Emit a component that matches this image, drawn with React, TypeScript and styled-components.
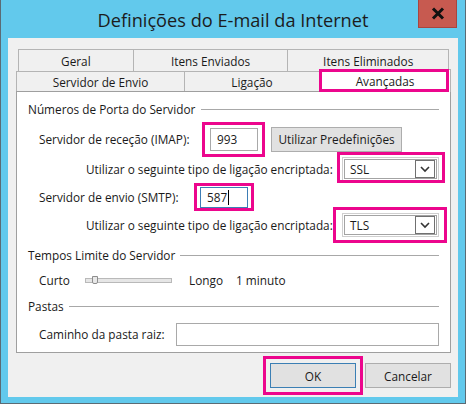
import React from "react";
import styled, { createGlobalStyle } from "styled-components";

const GlobalStyle = createGlobalStyle`
  html, body {
    margin: 0;
    padding: 0;
    background: #ffffff;
  }
  body {
    font-family: "Open Sans", "Noto Sans", sans-serif;
    font-size: 11.8px;
    color: #1a1a1a;
  }
`;

const Window = styled.div`
  width: 466px;
  height: 404px;
  box-sizing: border-box;
  border: 1px solid #5b6b74;
  border-top: none;
  background: #62c9ec;
  display: flex;
  flex-direction: column;
  overflow: hidden;
`;

const TitleBar = styled.div`
  height: 38px;
  flex: none;
  display: grid;
  grid-template-columns: 1fr auto 1fr;
  align-items: start;
`;

const Title = styled.div`
  grid-column: 2;
  padding-top: 7px;
  font-size: 18.2px;
  line-height: 26px;
  color: #1c1c1c;
  white-space: nowrap;
`;

const CloseButton = styled.button`
  grid-column: 3;
  justify-self: end;
  margin-right: 8px;
  width: 39px;
  height: 28px;
  padding: 0;
  border: 1px solid #a8453f;
  border-top: none;
  background: #c75a50;
  display: flex;
  align-items: center;
  justify-content: center;
`;

const Client = styled.div`
  flex: 1;
  margin: 0 7px 6px 7px;
  background: #f0f0f0;
  display: flex;
  flex-direction: column;
  padding: 11px 7px 0 8px;
`;

const TabRow = styled.div<{ $inset: number }>`
  display: flex;
  height: ${(p) => (p.$inset ? 22 : 20)}px;
  margin: 0 ${(p) => p.$inset}px;
`;

const Tab = styled.div<{ $w: number; $active?: boolean }>`
  position: relative;
  width: ${(p) => p.$w}px;
  box-sizing: border-box;
  border: 1px solid #b4b4b4;
  border-bottom: none;
  margin-left: -1px;
  &:first-child {
    margin-left: 0;
  }
  background: ${(p) => (p.$active ? "#ffffff" : "#f0f0f0")};
  display: flex;
  align-items: center;
  justify-content: center;
  white-space: nowrap;
  ${(p) =>
    p.$active &&
    `
    margin-top: -2px;
    height: calc(100% + 3px);
    z-index: 2;
  `}
`;

const Mark = styled.span<{ $t: number; $r: number; $b: number; $l: number }>`
  position: absolute;
  top: ${(p) => -p.$t}px;
  right: ${(p) => -p.$r}px;
  bottom: ${(p) => -p.$b}px;
  left: ${(p) => -p.$l}px;
  border: 3px solid #ec068d;
  pointer-events: none;
  z-index: 3;
`;

const Panel = styled.div`
  width: 435px;
  height: 262px;
  box-sizing: border-box;
  border: 1px solid #9f9f9f;
  background: #ffffff;
  padding: 2px 11px 0 11px;
  display: flex;
  flex-direction: column;
`;

const Row = styled.div<{ $h: number; $indent?: number }>`
  height: ${(p) => p.$h}px;
  flex: none;
  display: flex;
  align-items: center;
  padding-left: ${(p) => p.$indent ?? 0}px;
  white-space: nowrap;
`;

const GroupLine = styled.div<{ $gap: number }>`
  flex: 1;
  height: 1px;
  margin-left: ${(p) => p.$gap}px;
  background: #a8a8a8;
`;

const Label = styled.span<{ $w?: number }>`
  display: inline-block;
  width: ${(p) => (p.$w ? `${p.$w}px` : "auto")};
  flex: none;
`;

const Anchor = styled.div`
  position: relative;
  display: flex;
  flex: none;
`;

const TextBox = styled.div<{ $w: number; $h: number; $focus?: boolean }>`
  width: ${(p) => p.$w}px;
  height: ${(p) => p.$h}px;
  box-sizing: border-box;
  border: 1px solid ${(p) => (p.$focus ? "#3d7db5" : "#a9a9a9")};
  background: #ffffff;
  display: flex;
  align-items: center;
  padding-left: 6px;
`;

const Caret = styled.span`
  display: inline-block;
  width: 1px;
  height: 15px;
  margin-left: 1px;
  background: #000000;
`;

const PushButton = styled.button<{ $w: number; $default?: boolean }>`
  width: ${(p) => p.$w}px;
  height: 25px;
  box-sizing: border-box;
  border: 1px solid ${(p) => (p.$default ? "#3b7fb4" : "#adadad")};
  background: #e1e1e1;
  font-family: inherit;
  font-size: 11.8px;
  color: #1a1a1a;
  padding: 0;
`;

const Select = styled.div`
  width: 97px;
  height: 24px;
  box-sizing: border-box;
  border: 1px solid #cfcfcf;
  padding: 1px;
  display: flex;
  flex: none;
`;

const SelectInner = styled.div`
  flex: 1;
  border: 1px solid #a3a3a3;
  display: flex;
  align-items: center;
  justify-content: space-between;
  padding: 0 1px 0 5px;
`;

const DropButton = styled.div`
  width: 20px;
  height: 18px;
  box-sizing: border-box;
  border: 1px solid #707070;
  display: flex;
  align-items: center;
  justify-content: center;
`;

const Track = styled.div`
  position: relative;
  width: 87px;
  height: 5px;
  box-sizing: border-box;
  border: 1px solid #b9b9b9;
  background: #e6e6e6;
  margin: 0 17px 0 0;
  flex: none;
`;

const Thumb = styled.div`
  position: absolute;
  left: 6px;
  top: -3px;
  width: 6px;
  height: 8px;
  box-sizing: border-box;
  border: 1px solid #8e8e8e;
  border-radius: 0 0 2px 2px;
  background: #e8e8e8;
`;

const Footer = styled.div`
  flex: 1;
  display: flex;
  justify-content: flex-end;
  align-items: flex-start;
  gap: 9px;
  padding-top: 10px;
`;

const PushRight = styled(Anchor)`
  margin-left: auto;
`;

const Chevron = () => (
  <svg width="12" height="8" viewBox="0 0 12 8">
    <path d="M2 2 L6 6 L10 2" fill="none" stroke="#333" strokeWidth="1.6" />
  </svg>
);

const CloseGlyph = () => (
  <svg width="14" height="13" viewBox="0 0 14 13">
    <path d="M2 1.5 L12 11.5 M12 1.5 L2 11.5" stroke="#111" strokeWidth="3" />
  </svg>
);

const Group = ({ title, gap }: { title: string; gap: number }) => (
  <>
    {title}
    <GroupLine $gap={gap} />
  </>
);

const Dropdown = ({ value }: { value: string }) => (
  <Select>
    <SelectInner>
      {value}
      <DropButton>
        <Chevron />
      </DropButton>
    </SelectInner>
  </Select>
);

export default function App() {
  return (
    <>
      <GlobalStyle />
      <Window>
        <TitleBar>
          <Title>Definições do E-mail da Internet</Title>
          <CloseButton aria-label="Fechar">
            <CloseGlyph />
          </CloseButton>
        </TitleBar>
        <Client>
          <TabRow $inset={2}>
            <Tab $w={116}>Geral</Tab>
            <Tab $w={156}>Itens Enviados</Tab>
            <Tab $w={162}>Itens Eliminados</Tab>
          </TabRow>
          <TabRow $inset={0}>
            <Tab $w={169}>Servidor de Envio</Tab>
            <Tab $w={136}>Ligação</Tab>
            <Tab $w={132} $active>
              Avançadas
              <Mark $t={1} $r={-1} $b={0} $l={1} />
            </Tab>
          </TabRow>
          <Panel>
            <Row $h={30}>
              <Group title="Números de Porta do Servidor" gap={6} />
            </Row>
            <Row $h={30} $indent={11}>
              <Label $w={171}>Servidor de receção (IMAP):</Label>
              <Anchor>
                <TextBox $w={48} $h={23}>993</TextBox>
                <Mark $t={6} $r={7} $b={6} $l={8} />
              </Anchor>
              <PushButton $w={131} style={{ marginLeft: 13 }}>
                Utilizar Predefinições
              </PushButton>
            </Row>
            <Row $h={30} $indent={58}>
              Utilizar o seguinte tipo de ligação encriptada:
              <PushRight>
                <Dropdown value="SSL" />
                <Mark $t={5} $r={6} $b={2} $l={5} />
              </PushRight>
            </Row>
            <Row $h={26} $indent={11}>
              <Label $w={161}>Servidor de envio (SMTP):</Label>
              <Anchor>
                <TextBox $w={48} $h={21} $focus>
                  587
                  <Caret />
                </TextBox>
                <Mark $t={4} $r={6} $b={3} $l={6} />
              </Anchor>
            </Row>
            <Row $h={30} $indent={58}>
              Utilizar o seguinte tipo de ligação encriptada:
              <PushRight>
                <Dropdown value="TLS" />
                <Mark $t={6} $r={8} $b={6} $l={9} />
              </PushRight>
            </Row>
            <Row $h={30}>
              <Group title="Tempos Limite do Servidor" gap={5} />
            </Row>
            <Row $h={20} $indent={11}>
              <Label $w={46}>Curto</Label>
              <Track>
                <Thumb />
              </Track>
              <Label $w={47}>Longo</Label>
              <Label>1 minuto</Label>
            </Row>
            <Row $h={32}>
              <Group title="Pastas" gap={5} />
            </Row>
            <Row $h={24} $indent={11}>
              <Label $w={137}>Caminho da pasta raiz:</Label>
              <TextBox $w={263} $h={23} />
            </Row>
          </Panel>
          <Footer>
            <Anchor>
              <PushButton $w={86} $default>
                OK
              </PushButton>
              <Mark $t={7} $r={7} $b={7} $l={7} />
            </Anchor>
            <PushButton $w={86}>Cancelar</PushButton>
          </Footer>
        </Client>
      </Window>
    </>
  );
}
